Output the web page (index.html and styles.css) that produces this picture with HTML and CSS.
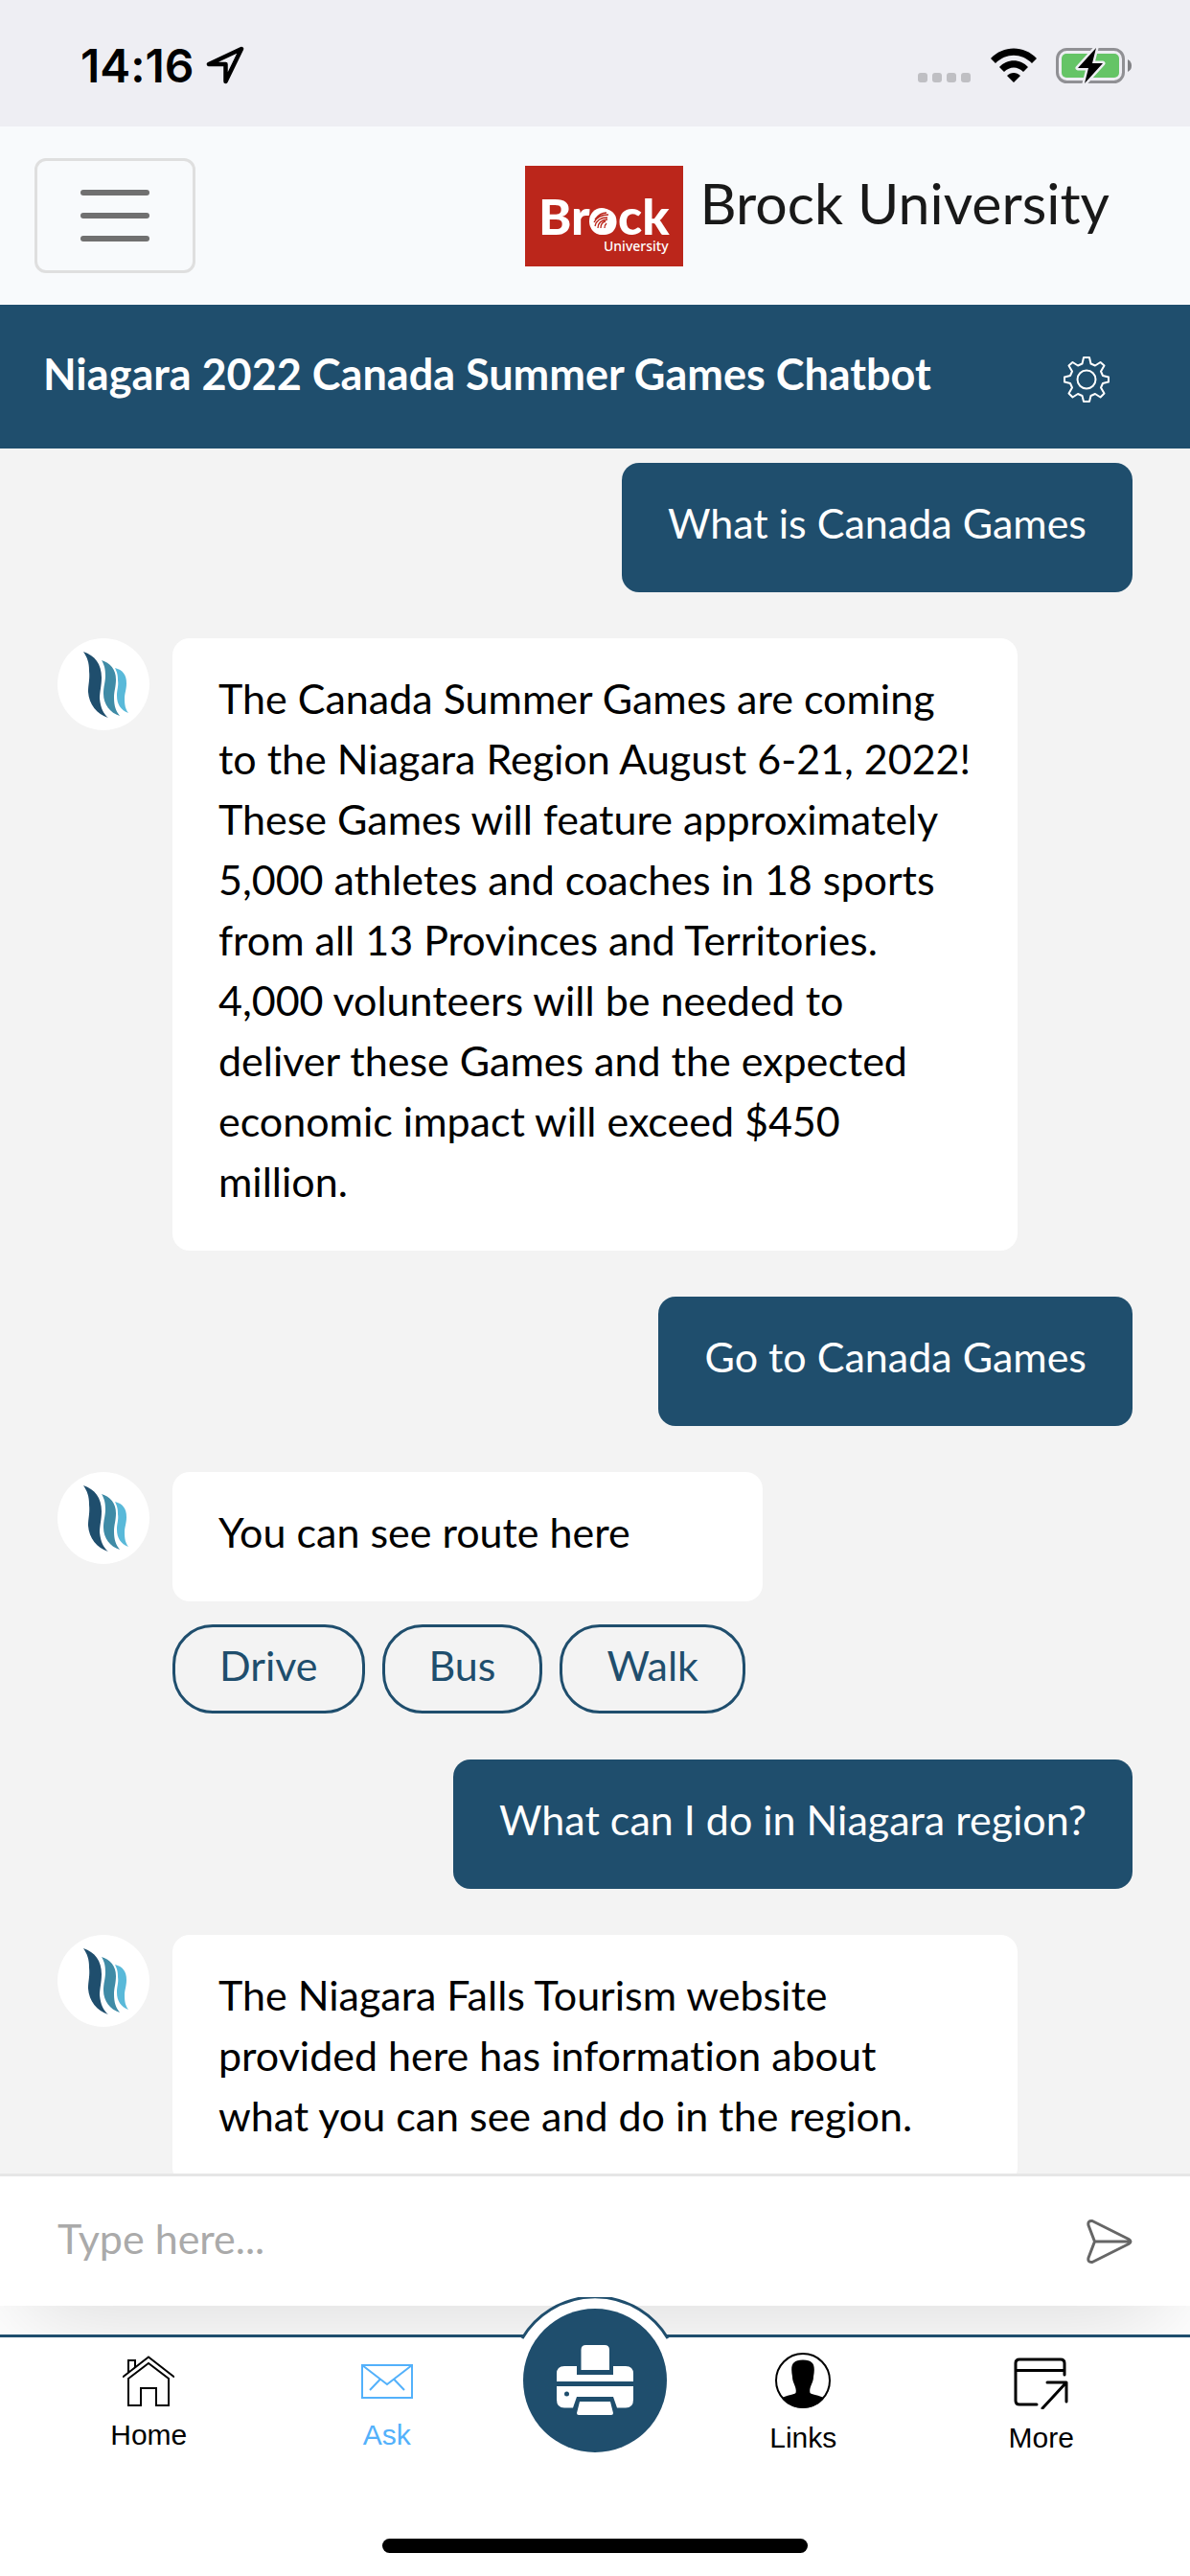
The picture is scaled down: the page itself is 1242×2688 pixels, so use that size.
FILE: index.html
```html
<!DOCTYPE html>
<html lang="en">
<head>
<meta charset="utf-8">
<meta name="viewport" content="width=device-width, initial-scale=1">
<title>Niagara 2022 Canada Summer Games Chatbot</title>
<link rel="stylesheet" href="styles.css">
</head>
<body>
<svg class="defs" aria-hidden="true">
  <symbol id="flame" viewBox="0 0 96 96">
    <path fill="#1f4e6d" d="M27 14c12 4 19 13 19 27c0 9-2 15-2 22c1 10 4 16 9 20c-12-4-20-14-21-27c0-8 2-13 1-22c0-9-2-14-6-20z"/>
    <path fill="#3f8ba6" d="M46 23c9 3 15 9 15 20c0 8-2 12-2 19c0 9 2 14 6 19c-10-3-17-12-17-23c0-8 2-12 2-19c0-7-1-11-4-16z"/>
    <path fill="#59b9d9" d="M60 31c8 2 12 7 12 16c0 7-2 10-2 16c0 7 1 11 4 15c-8-3-12-9-12-18c0-7 2-10 1-16c0-6-1-9-3-13z"/>
  </symbol>
</svg>

<div class="status">
  <div class="status-left">
    <span class="time">14:16</span>
    <svg width="40" height="40" viewBox="0 0 40 40" fill="none" stroke="#000" stroke-width="4.500" stroke-linejoin="round"><path d="M37 3L3 19H20.500V37z"/></svg>
  </div>
  <div class="status-right">
    <svg width="56" height="40" viewBox="0 0 56 40" fill="#bfbfc3"><rect y="28" width="10" height="10" rx="3"/><rect x="15" y="28" width="10" height="10" rx="3"/><rect x="30" y="28" width="10" height="10" rx="3"/><rect x="45" y="28" width="10" height="10" rx="3"/></svg>
    <svg width="48" height="40" viewBox="0 0 48 40"><path d="M0 13C13-1 35-1 48 13L43 18C32 7 16 7 5 18zM9 22C17 13 31 13 39 22L34 27C28 21 20 21 14 27zM17 31C21 27 27 27 31 31L24 38z"/></svg>
    <svg width="80" height="40" viewBox="0 0 80 40"><rect x="1.500" y="3.500" width="69" height="34" rx="10" fill="none" stroke="#909094" stroke-width="3"/><rect x="6" y="8" width="60" height="25" rx="5" fill="#65c466"/><path d="M75 14q4 2 4 6.500t-4 6.500z" fill="#808084"/><path d="M42 2L23 23H34L30 39L49 18H38z" fill="#000" stroke="#eeeef3" stroke-width="5" stroke-linejoin="round" paint-order="stroke"/></svg>
  </div>
</div>

<header class="navbar">
  <button class="menu" type="button" aria-label="Open menu"><span></span><span></span><span></span></button>
  <a class="brand" href="#">
    <svg class="brand-logo" viewBox="0 0 165 105" role="img" aria-label="Brock University logo">
      <rect width="165" height="105" fill="#bb261b"/>
      <text class="logo-name" x="14" y="72">Brock</text>
      <text class="logo-sub" x="82" y="89">University</text>
      <ellipse cx="80" cy="58" rx="13" ry="14" fill="#fff"/>
      <g fill="none" stroke="#bb261b" stroke-width="1.300"><path d="M72 59q4-8 15-8M73 63q2-9 13-9M76 65q0-8 10-9M79 65q0-6 5-7M73 56q5-7 12-7M83 65q0-3 2-5"/></g>
    </svg>
    <span>Brock University</span>
  </a>
</header>

<main class="chat">
  <div class="titlebar">
    <h1>Niagara 2022 Canada Summer Games Chatbot</h1>
    <button class="icon-button" type="button" aria-label="Settings">
      <svg width="48" height="48" viewBox="0 0 48 48" fill="none" stroke="#fff" stroke-width="2" stroke-linejoin="round"><path d="M21 1H27L28.500 7.500L33 9.500L38.500 6L42.500 9.500L39 15.500L41 20L47 21.500V26.500L41 28L39 32.500L42.500 38.500L38.500 42.500L33 39L28.500 41L27 47H21L19.500 41L15 39L9.500 42.500L5.500 38.500L9 32.500L7 28L1 26.500V21.500L7 20L9 15.500L5.500 9.500L9.500 6L15 9.500L19.500 7.500z"/><circle cx="24" cy="24" r="9.500"/></svg>
    </button>
  </div>

  <div class="messages">
    <p class="bubble user">What is Canada Games</p>
    <div class="bot">
      <svg class="avatar"><use href="#flame"/></svg>
      <div class="reply"><p class="bubble">The Canada Summer Games are coming to the Niagara Region August 6-21, 2022! These Games will feature approximately 5,000 athletes and coaches in 18 sports from all 13 Provinces and Territories. 4,000 volunteers will be needed to<br>deliver these Games and the expected economic impact will exceed $450<br>million.</p></div>
    </div>
    <p class="bubble user">Go to Canada Games</p>
    <div class="bot">
      <svg class="avatar"><use href="#flame"/></svg>
      <div class="reply">
        <p class="bubble">You can see route here</p>
        <div class="choices">
          <button type="button">Drive</button>
          <button type="button">Bus</button>
          <button type="button">Walk</button>
        </div>
      </div>
    </div>
    <p class="bubble user">What can I do in Niagara region?</p>
    <div class="bot">
      <svg class="avatar"><use href="#flame"/></svg>
      <div class="reply"><p class="bubble">The Niagara Falls Tourism website provided here has information about<br>what you can see and do in the region.</p></div>
    </div>
  </div>

  <form class="composer">
    <input type="text" placeholder="Type here..." aria-label="Message">
    <button class="icon-button" type="submit" aria-label="Send">
      <svg width="48" height="48" viewBox="0 0 48 48" fill="none" stroke="#666" stroke-width="3" stroke-linejoin="round"><path d="M6 2.500L44 21.500Q48 24 44 26.500L6 45.500Q1 46 2 41L8.500 24L2 7Q1 2 6 2.500zM8.500 24H46"/></svg>
    </button>
  </form>
</main>

<nav class="tabs">
  <a class="tab" href="#">
    <svg width="54" height="54" viewBox="0 0 54 54" fill="none" stroke="#000" stroke-width="2"><path d="M0 23.500L27 2.500L54 23.500M6 19V6H13V13M6 25L27 9L48 25V53H35V35H19V53H6z"/></svg>
    <span>Home</span>
  </a>
  <a class="tab active" href="#">
    <svg width="54" height="54" viewBox="0 0 54 54" fill="none" stroke="#53b1fb" stroke-width="2"><path d="M1 11H53V45H1zM1 11L27 31L53 11M20 25.500L9 37M34 25.500L45 37"/></svg>
    <span>Ask</span>
  </a>
  <button class="print" type="button" aria-label="Print">
    <svg class="ring" viewBox="0 0 156 45"><path d="M3 43A88.500 88.500 0 0 1 153 43V45H3z" fill="#fff"/><path d="M2 43A88.500 88.500 0 0 1 154 43" fill="none" stroke="#1f4e6d" stroke-width="3"/></svg>
    <span class="disc">
      <svg width="80" height="74" viewBox="0 0 80 74" fill="#fff"><path d="M25.500 26V5Q25.500 0 30.500 0H50Q55 0 55 5V26zM0 38V30Q0 22 8 22H21V31H59V22H72Q80 22 80 30V38zM0 43H80V57Q80 65.500 72 65.500H63L59 54H21L17 65.500H8Q0 65.500 0 57zM24 59H56L59 71Q59 73 57 73H23Q21 73 21 71z"/><circle cx="10.500" cy="51" r="2.500" fill="#1f4e6d"/></svg>
    </span>
  </button>
  <a class="tab tall" href="#">
    <svg width="60" height="60" viewBox="0 0 60 60"><circle cx="30" cy="30" r="28" fill="#fff" stroke="#000" stroke-width="2"/><path d="M8 48.500C13 45 20 45 22.500 43C24 37 19 33 19 26C17 15 18 8.500 30 8.500S43 15 41 26C41 33 36 37 37.500 43C40 45 47 45 52 48.500C42 62 18 62 8 48.500z"/></svg>
    <span>Links</span>
  </a>
  <a class="tab tall" href="#">
    <svg width="60" height="60" viewBox="0 0 60 60" fill="none" stroke="#000" stroke-width="3" stroke-linecap="round" stroke-linejoin="round"><path d="M25 55H7Q3 55 3 51V12Q3 8 7 8H50Q54 8 54 12V24M3 19.500H54M31 59L55.500 32.500M36 32H56V52"/></svg>
    <span>More</span>
  </a>
  <div class="home-indicator"></div>
</nav>
</body>
</html>
```
FILE: styles.css
```css
* {
  box-sizing: border-box;
}

body {
  margin: 0;
  height: 100vh;
  display: flex;
  flex-direction: column;
  overflow: hidden;
  background: #fff;
  color: #000;
  font-family: Lato, "Open Sans", sans-serif;
  font-size: 43px;
  line-height: 63px;
  font-variant-ligatures: none;
}

button,
input {
  font: inherit;
  color: inherit;
}

button {
  cursor: pointer;
}

a {
  color: inherit;
  text-decoration: none;
}

svg {
  display: block;
}

.defs {
  display: none;
}

.status {
  flex: none;
  position: relative;
  z-index: 1;
  height: 132px;
  padding: 4px 60px 0 84px;
  display: flex;
  justify-content: space-between;
  align-items: center;
  background: #eeeef3;
}

.status-left {
  display: flex;
  align-items: center;
  gap: 12px;
}

.time {
  font-family: Inter, sans-serif;
  font-size: 48px;
  font-weight: 600;
}

.status-right {
  display: flex;
  gap: 20px;
}

.navbar {
  flex: none;
  position: relative;
  z-index: 1;
  height: 186px;
  padding: 0 84px 0 36px;
  display: flex;
  justify-content: space-between;
  align-items: center;
  background: #f8fafc;
}

.menu {
  width: 168px;
  height: 120px;
  padding: 0;
  display: flex;
  flex-direction: column;
  align-items: center;
  justify-content: center;
  gap: 18px;
  background: none;
  border: 3px solid #dfdfdf;
  border-radius: 12px;
}

.menu span {
  width: 72px;
  height: 6px;
  border-radius: 3px;
  background: #707070;
}

.brand {
  display: flex;
  gap: 18px;
  color: #191919;
  font-size: 59px;
  line-height: 78px;
}

.brand-logo {
  width: 165px;
  height: 105px;
}

.logo-name {
  fill: #fff;
  font-size: 52px;
  font-weight: 900;
}

.logo-sub {
  fill: #fff;
  font-family: "Noto Sans", sans-serif;
  font-size: 14px;
  font-weight: 500;
}

.chat {
  flex: 1;
  min-height: 0;
  margin-bottom: 30px;
  display: flex;
  flex-direction: column;
  box-shadow: 0 36px 96px -24px rgba(0, 0, 0, 0.15);
}

.titlebar {
  flex: none;
  height: 150px;
  padding: 6px 84px 0 45px;
  display: flex;
  align-items: center;
  justify-content: space-between;
  background: #1f4e6d;
  color: #fff;
}

.titlebar h1 {
  margin: 0 0 12px;
  font-size: 45px;
  font-weight: 700;
}

.icon-button {
  padding: 0;
  border: 0;
  background: none;
}

.messages {
  flex: 1;
  min-height: 0;
  overflow: hidden;
  padding: 15px 60px 0;
  display: flex;
  flex-direction: column;
  gap: 48px;
  background: #f3f3f3;
}

.messages > * {
  flex: none;
}

.bubble {
  margin: 0;
  padding: 31px 48px 41px;
  border-radius: 18px;
  background: #fff;
}

.user {
  align-self: flex-end;
  background: #1f4e6d;
  color: #fff;
}

.bot {
  display: flex;
  align-items: flex-start;
  gap: 24px;
  padding-right: 120px;
}

.avatar {
  flex: none;
  width: 96px;
  height: 96px;
  border-radius: 50%;
  background: #fff;
}

.reply {
  display: flex;
  flex-direction: column;
  gap: 24px;
}

.choices {
  display: flex;
  gap: 18px;
  padding-right: 18px;
}

.choices button {
  height: 93px;
  padding: 0 46px 8px;
  border: 3px solid #1f4e6d;
  border-radius: 42px;
  background: none;
  color: #1f4e6d;
}

.composer {
  flex: none;
  height: 138px;
  padding: 0 60px;
  display: flex;
  align-items: center;
  border-top: 3px solid #e6e6e6;
  background: #fff;
}

.composer input {
  flex: 1;
  min-width: 0;
  padding: 0 0 6px;
  border: 0;
  outline: 0;
  background: none;
}

.composer input::placeholder {
  color: #aaa;
  opacity: 1;
}

.tabs {
  flex: none;
  position: relative;
  height: 252px;
  padding: 0 31px;
  display: grid;
  grid-template-columns: 1fr 1fr 186px 1fr 1fr;
  justify-items: center;
  align-items: start;
  border-top: 3px solid #1f4e6d;
  background: #fff;
}

.tab {
  padding-top: 18px;
  display: flex;
  flex-direction: column;
  align-items: center;
  gap: 12px;
  font-family: "Liberation Sans", Arial, sans-serif;
  font-size: 30px;
  line-height: 36px;
}

.tall {
  padding-top: 15px;
}

.active {
  color: #53b1fb;
}

.print {
  position: relative;
  width: 156px;
  height: 120px;
  padding: 0;
  border: 0;
  background: none;
}

.ring {
  position: absolute;
  top: -42px;
  left: 0;
  width: 156px;
  height: 45px;
}

.disc {
  position: absolute;
  top: -30px;
  left: 3px;
  width: 150px;
  height: 150px;
  display: flex;
  align-items: center;
  justify-content: center;
  border-radius: 50%;
  background: #1f4e6d;
}

.home-indicator {
  position: absolute;
  bottom: 24px;
  left: 50%;
  width: 444px;
  height: 15px;
  margin-left: -222px;
  border-radius: 8px;
  background: #000;
}
```
